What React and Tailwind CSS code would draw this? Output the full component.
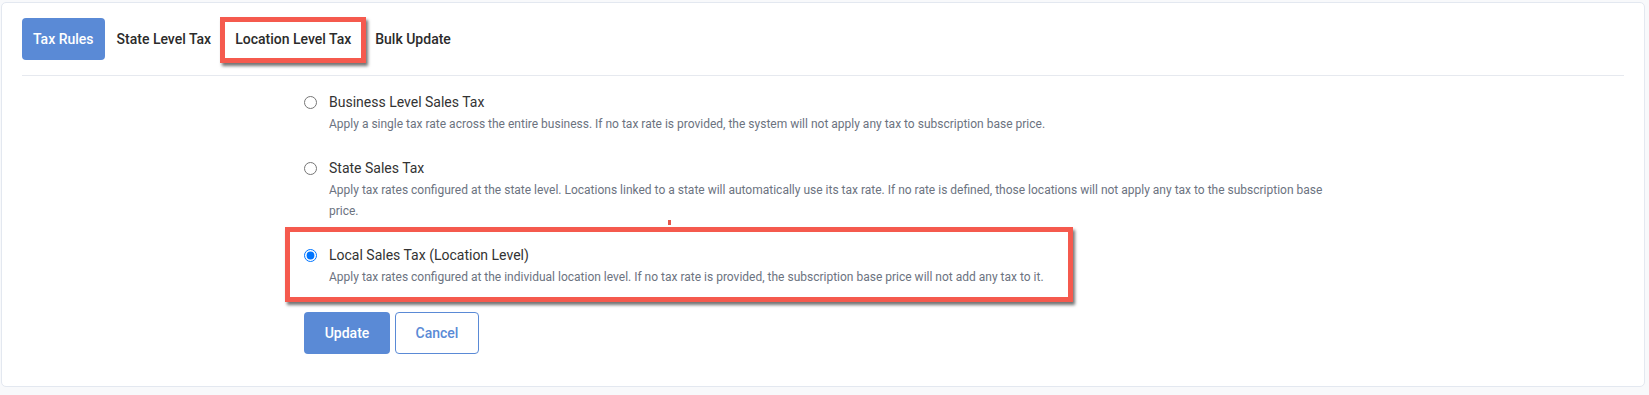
import React, { useState } from "react";

const options = [
  {
    id: "business",
    title: "Business Level Sales Tax",
    desc: "Apply a single tax rate across the entire business. If no tax rate is provided, the system will not apply any tax to subscription base price.",
  },
  {
    id: "state",
    title: "State Sales Tax",
    desc: "Apply tax rates configured at the state level. Locations linked to a state will automatically use its tax rate. If no rate is defined, those locations will not apply any tax to the subscription base price.",
  },
  {
    id: "local",
    title: "Local Sales Tax (Location Level)",
    desc: "Apply tax rates configured at the individual location level. If no tax rate is provided, the subscription base price will not add any tax to it.",
    marked: true,
  },
];

const App = () => {
  const [selected, setSelected] = useState("local");

  return (
    <div
      className="min-h-[395px] bg-[#f8f9fb] pl-px pr-[4px] pt-[2px] pb-[7px]"
      style={{ fontFamily: "Roboto, 'Liberation Sans', sans-serif" }}
    >
      <div className="bg-white border border-[#e3e8f0] rounded-[5px] px-5 pt-[15px] pb-[32px]">
        {/* Tabs */}
        <div className="flex items-center h-[42px] text-[14px] font-medium text-[#2b2b2b]">
          <button className="h-[42px] px-[11px] rounded-[4px] bg-[#5a8ad6] text-white">
            Tax Rules
          </button>
          <span className="px-3">State Level Tax</span>
          <span className="relative px-3">
            Location Level Tax
            {/* annotation box */}
            <span className="absolute left-[-3px] right-[-3px] top-[-12px] bottom-[-13px] border-[5px] border-[#f55a4e] shadow-[2px_3px_3px_rgba(0,0,0,0.55)]" />
          </span>
          <span className="px-3">Bulk Update</span>
        </div>
        <div className="mt-[15px] border-t border-[#e6e9ef]" />

        {/* Options */}
        <div className="w-[1038px] mx-auto pt-[15px]">
          {options.map((o) => (
            <label
              key={o.id}
              className="relative flex items-start mb-[22px] cursor-pointer"
            >
              <input
                type="radio"
                name="taxType"
                checked={selected === o.id}
                onChange={() => setSelected(o.id)}
                className="m-0 mt-[4.5px] w-[13px] h-[13px] shrink-0"
              />
              <div className="ml-[12px] pr-[10px]">
                <div className="text-[14px] leading-[22px] text-[#333]">{o.title}</div>
                <div className="mt-px text-[12px] leading-[21px] text-[#6c737f]">
                  {o.desc}
                </div>
              </div>
              {o.marked && (
                <>
                  <span className="absolute left-[-19px] w-[788px] top-[-17px] h-[75px] border-[5px] border-[#f55a4e] shadow-[2px_3px_3px_rgba(0,0,0,0.55)] pointer-events-none" />
                  <span className="absolute left-[364px] top-[-24px] w-[3px] h-[5px] bg-[#e4584c]" />
                </>
              )}
            </label>
          ))}

          <div className="flex gap-[5px] mt-[24px]">
            <button className="h-[42px] w-[86px] rounded-[4px] bg-[#5a8ad6] text-white text-[14px] font-medium">
              Update
            </button>
            <button className="h-[42px] w-[84px] rounded-[4px] border border-[#5a8ad6] text-[#5a8ad6] text-[14px] font-medium bg-white">
              Cancel
            </button>
          </div>
        </div>
      </div>
    </div>
  );
};

export default App;
